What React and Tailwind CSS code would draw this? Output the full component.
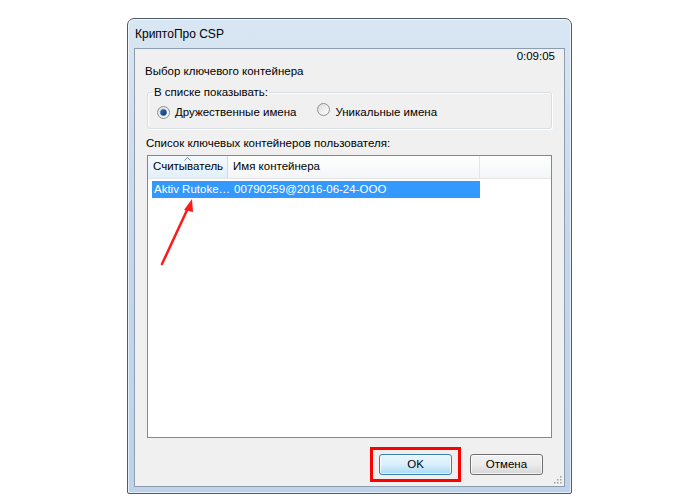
import React from "react";

function Radio({ checked }) {
  return (
    <span className="relative inline-flex h-[13px] w-[13px] items-center justify-center rounded-full border border-[#8e8f8f] bg-gradient-to-br from-[#dcdcdc] to-[#ffffff]">
      {checked && (
        <span className="h-[7px] w-[7px] rounded-full bg-gradient-to-br from-[#2a6fb5] to-[#0d3a73] border border-[#1d5aa0]" />
      )}
    </span>
  );
}

export default function App() {
  return (
    <div
      className="relative h-[496px] w-[700px] overflow-hidden bg-white pl-[127px] pt-[18px] text-[11.5px] text-black"
      style={{ fontFamily: '"Liberation Sans", Arial, sans-serif' }}
    >
      {/* window */}
      <div className="flex h-[476px] w-[445px] flex-col rounded-t-[7px] rounded-b-[2px] border border-[#4d5b6b] bg-gradient-to-b from-[#d9e6f3] via-[#c4d7eb] to-[#bed3ea] px-[6px] pb-[6px] shadow-[inset_0_0_0_1px_rgba(255,255,255,0.6)]">
        <div className="flex h-[29px] shrink-0 items-center pl-[1px] text-[12px] text-black">
          КриптоПро CSP
        </div>
        {/* client */}
        <div className="relative flex min-h-0 flex-1 flex-col border border-[#8d9db1] bg-[#f0f0f0] pl-[10px] pr-[9px]">
          <div className="flex h-[15px] justify-end leading-[15px]">0:09:05</div>
          <div className="h-[15px] leading-[15px]">Выбор ключевого контейнера</div>

          <fieldset className="mt-[6px] ml-[2px] mr-[3px] h-[44px] rounded-[3px] border border-[#d5dfe5] px-[5px] shadow-[inset_1px_1px_0_#fff,1px_1px_0_#fff]">
            <legend className="px-[1px] leading-[15px]">В списке показывать:</legend>
            <div className="flex h-[22px] items-center pl-[4px] pt-[3px]">
              <Radio checked />
              <span className="ml-[5px]">Дружественные имена</span>
              <span className="ml-[21px]">
                <Radio />
              </span>
              <span className="ml-[5px]">Уникальные имена</span>
            </div>
          </fieldset>

          <div className="mt-[7px] h-[15px] pl-[1px] leading-[15px]">Список ключевых контейнеров пользователя:</div>

          {/* list view */}
          <div className="mt-[4px] ml-[2px] mr-[3px] flex h-[283px] flex-col border border-[#828790] bg-white">
            <div className="flex h-[23px] shrink-0 border-b border-[#e5e5e5] bg-gradient-to-b from-white to-[#f4f5f6]">
              <div className="relative flex w-[80px] items-end border-r border-[#c6dcee] bg-gradient-to-b from-[#f4fafe] to-[#e1f0fb] pb-[3px] pl-[5px]">
                <svg className="absolute left-[36px] top-[1px]" width="7" height="4" viewBox="0 0 7 4">
                  <path d="M0.5 3.5 L3.5 0.5 L6.5 3.5" fill="none" stroke="#6f86a3" strokeWidth="1" />
                </svg>
                Считыватель
              </div>
              <div className="flex w-[252px] items-end border-r border-[#e5e5e5] pb-[3px] pl-[5px]">
                Имя контейнера
              </div>
              <div className="flex-1" />
            </div>
            <div className="ml-[4px] mt-[2px] flex h-[17px] w-[328px] items-center whitespace-nowrap bg-[#3399ff] text-white">
              <span className="w-[82px] overflow-hidden pl-[2px]">Aktiv Rutoke…</span>
              <span>00790259@2016-06-24-OOO</span>
            </div>
          </div>

          <div className="mt-[9px] flex items-center justify-end pr-[12px]">
            <div className="flex h-[35px] w-[91px] items-center justify-center border-[3px] border-[#ff0000]">
              <button className="h-[21px] w-[73px] rounded-[3px] border border-[#3c7fb1] bg-gradient-to-b from-[#eaf6fd] via-[#d9f0fc] to-[#a7d9f5] shadow-[inset_0_0_0_1px_rgba(255,255,255,0.7)]">
                OK
              </button>
            </div>
            <button className="ml-[9px] h-[21px] w-[73px] rounded-[3px] border border-[#707070] bg-gradient-to-b from-[#f2f2f2] via-[#ebebeb] to-[#d6d6d6] shadow-[inset_0_0_0_1px_rgba(255,255,255,0.7)]">
              Отмена
            </button>
          </div>

          {/* resize grip */}
          <svg className="absolute bottom-[2px] right-[2px]" width="10" height="10" viewBox="0 0 10 10">
            {[[8, 2], [8, 5], [8, 8], [5, 5], [5, 8], [2, 8]].map(([x, y], i) => (
              <rect key={i} x={x} y={y} width="1.5" height="1.5" fill="#a0a0a0" />
            ))}
          </svg>
        </div>
      </div>

      {/* red arrow annotation */}
      <svg className="absolute left-0 top-0" width="700" height="496" viewBox="0 0 700 496">
        <line x1="162" y1="264" x2="188" y2="208" stroke="#ff1a1a" strokeWidth="2.5" strokeLinecap="round" />
        <polygon points="192,199 184,210 193,212" fill="#ff1a1a" />
      </svg>
    </div>
  );
}
